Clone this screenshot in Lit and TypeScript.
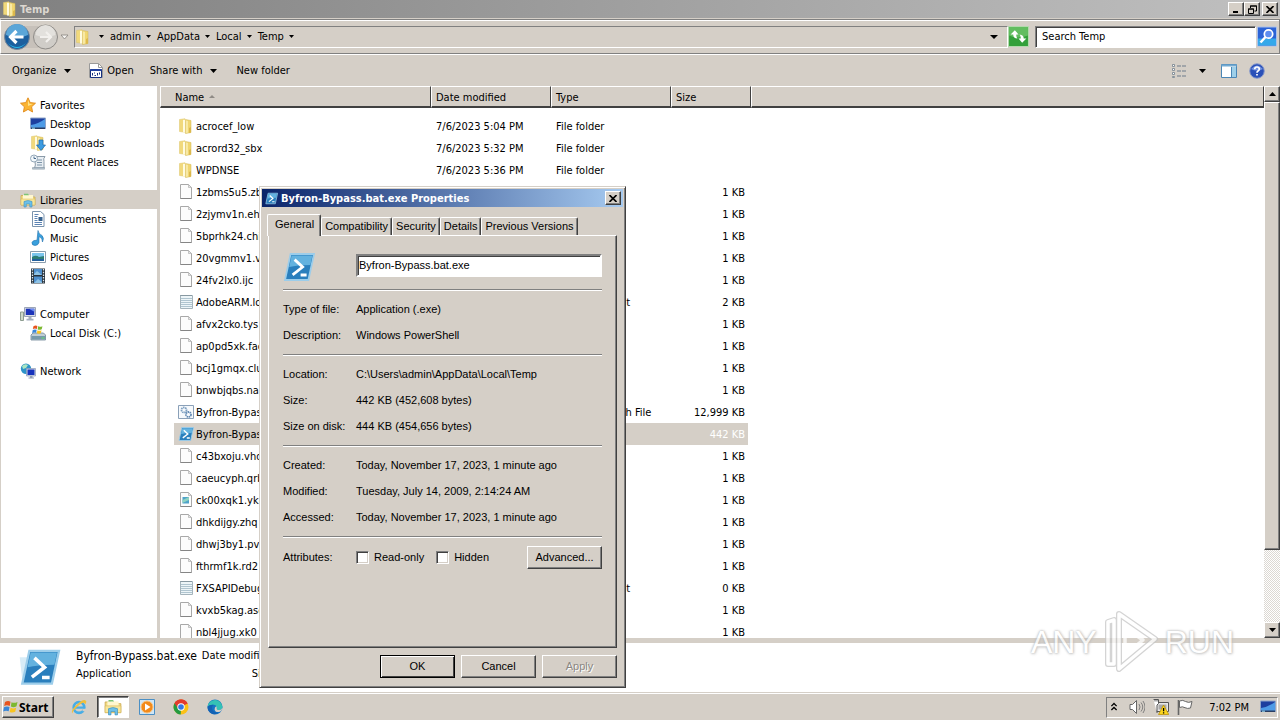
import { LitElement, html, css, svg, nothing } from "lit";
import { customElement } from "lit/decorators.js";
import { classMap } from "lit/directives/class-map.js";

const box = (body: unknown, size = 16, view = "0 0 16 16") =>
  html`<svg width=${size} height=${size} viewBox=${view} aria-hidden="true">${body}</svg>`;

const folderArt = svg`<path d="M1.500 1.500 7 .7v13.600L1.500 13.500z" fill="#f1d97c" stroke="#dcc468" stroke-width=".5"/><path d="M5 1.800h3.500v12.700H5z" fill="#fffbe0"/><path d="M7.500 1.500 13 2.500v12L7.500 15.600z" fill="#f0d671" stroke="#d3b751" stroke-width=".5"/><path d="M8 2.500 10 3v11.500L8 15z" fill="#f8e9a4"/><path d="M13 9v5.500l-2 .5V10z" fill="#dcb84c"/>`;
const openFolderArt = svg`<path d="M1 3.500h5l1 1.500h8v8H1z" fill="#f2dc83" stroke="#c9a64b" stroke-width=".7"/><path d="M3 3h10v4H3z" fill="#fff7cf"/><path d="M4 1.800h4l1 1.400H4z" fill="#7cc576"/><path d="M1 7h14v6H1z" fill="#f7e69b" stroke="#d5b659" stroke-width=".5"/><path d="M4 15V9.500q4-2 8 0V15h-2.200v-3H6.200v3z" fill="#6cc0e8" stroke="#3d8fbf" stroke-width=".6"/>`;
const psArt = svg`<path d="M3.800 1.500h11.700l-2.800 13H1z" fill="#2a7fbd" stroke="#9ccdea" stroke-width=".9"/><path d="M4.300 2.200h10.400l-1 4.800Q7 7 3.100 8z" fill="#63b2df"/><path d="m5.800 4.300 4 3.700-5 3.900M8.800 12h3" fill="none" stroke="#fff" stroke-width="1.400"/>`;
const screenArt = svg`<path d="M.5 2h15v10.500H.5z" fill="#1d3f9f" stroke="#8fa5c9"/><path d="M1 9q7-1 14-6v9H1z" fill="#4e9be6"/><path d="M1 11.500h14v1.500H1z" fill="#2a3d63"/><path d="M2 11.700h3v1H2z" fill="#9fe0f5"/>`;
const winFlag = svg`<path d="M2 3q3-2 5.500-.3L6.700 7Q4 5.700 1.200 7z" fill="#e8541e"/><path d="M8.500 3.200Q11 4.600 14.500 3l-1 4.300q-3 1.600-5.600.2z" fill="#7cb82f"/><path d="M1 8.200q3-1.400 5.500-.1L5.700 12.300Q3 11 .2 12.500z" fill="#3a87d8"/><path d="M7.600 8.700q2.500 1.500 5.600 0l-1 4.100q-3 1.500-5.500.1z" fill="#f8c420"/>`;
const page = svg`<path d="M2.500.5h8l3 3v11h-11z" fill="#fcfcfc" stroke="#a8a8a8"/><path d="M10.500.5v3h3z" fill="#e6e6e6" stroke="#b0b0b0" stroke-width=".7"/><path d="M2.500 14.500h11" stroke="#858585"/>`;

const icons: Record<string, unknown> = {
  folder: folderArt,
  file: page,
  text: svg`<path d="M2.500 1.500h12v13h-12z" fill="#edf5f8" stroke="#a5b4bc"/><path d="M3 4.500h11M3 6.500h11M3 8.500h11M3 10.500h11M3 12.500h11" stroke="#a9c0cb" stroke-width=".9"/><path d="M2.500 1.500h12" stroke="#687c87" stroke-dasharray="1 1"/>`,
  config: svg`<path d="M.5 1.500h15v13H.5z" fill="#f6f9fc" stroke="#8aa0b8"/><circle cx="6" cy="6" r="2.500" fill="none" stroke="#7d9fc0" stroke-width="1.800" stroke-dasharray="1.500 .6"/><circle cx="10.500" cy="10.500" r="2.500" fill="none" stroke="#5f87b2" stroke-width="1.800" stroke-dasharray="1.500 .6"/>`,
  image: svg`${page}<path d="M4.500 5h6.500v6.500H4.500z" fill="#4fa3c9"/><path d="M4.500 8 11 5v3l-6.500 3z" fill="#8fd3c2"/>`,
  ps: psArt,
  star: svg`<path d="m8 .8 2.200 4.800 5.300.6-3.900 3.600 1 5.200L8 12.400 3.400 15l1-5.200L.5 6.200l5.300-.6z" fill="#fbb431" stroke="#e08a1c" stroke-width=".9"/><path d="m8 3 1.400 3.700 3.600.4-5 2z" fill="#ffe48a"/>`,
  desktop: screenArt,
  downloads: svg`${folderArt}<path d="M9 5h4v5h2.500L11 15.500 6.500 10H9z" fill="#3c9be0" stroke="#1a68ad" stroke-width=".7"/>`,
  recent: svg`<path d="M5 2.500h10q-2 2-1 5v6.500H4.500q1.500-3 .5-6z" fill="#e8eef3" stroke="#8a9aa8"/><path d="M2.500 13.500h12v1.700h-12z" fill="#b7c5d0" stroke="#7f909f" stroke-width=".5"/><path d="M7 6h5M7 8.500h5M7 11h5" stroke="#7d94a8"/><circle cx="4" cy="4.500" r="3.500" fill="#f4f9fc" stroke="#93a7b8"/><path d="M4 2.500v2h2" stroke="#46688a" fill="none"/>`,
  libraries: openFolderArt,
  documents: svg`<path d="M2.500.5h8l3.500 3v12H2.500z" fill="#fff" stroke="#7a93ad"/><path d="M4.500 3.500h4M4.500 5.500h3M4.500 11.500h7.500M4.500 13.500h7.500M4.500 7.500h3M4.500 9.500h3" stroke="#5b83b4"/><path d="M8.500 6h4v4h-4z" fill="#35618f"/>`,
  music: svg`<path d="M8 .5q.5 3.500 4 5 2.500 2.500.5 6.500.2-4-3.500-5.500v6Q8 15.500 5 15.500 1.600 15.300 2 12.500q.8-2.600 5-2.300z" fill="#3aa0dd" stroke="#1e70ac" stroke-width=".6"/>`,
  pictures: svg`<path d="M.5 2.500h15v11H.5z" fill="#fff" stroke="#8b9dad"/><path d="M2 4h12v4H2z" fill="#7cc5ec"/><path d="M2 8q4-2.500 7 0l5-1v5H2z" fill="#2d7d74"/><path d="M2 10h12v2H2z" fill="#225f9c"/>`,
  videos: svg`<path d="M1 .5h14v15H1z" fill="#27323c"/><path d="M4 1h8v6H4zM4 8.500h8V15H4z" fill="#4d8fce"/><path d="m4 6 3-3 5 4H4zM4 15l4-4 4 3v1z" fill="#8fc3e5"/><path d="M2.500 1v14M13.500 1v14" stroke="#dfe7ee" stroke-width="1.300" stroke-dasharray="1.500 1.200"/>`,
  computer: svg`<path d="M.5 6h3v8.500h-3z" fill="#cfd9c9" stroke="#8d9d90"/><path d="M4.500 1.500h11v9h-11z" fill="#dcdfe6" stroke="#9ba5b7"/><path d="M5.800 2.700h8.500V9H5.800z" fill="#1c34b9"/><path d="M9 2.700h5.300v3z" fill="#6c8cf0"/><path d="M8.500 11h3v1.700h2v1.800H6.500v-1.800h2z" fill="#a5afbf"/>`,
  disk: svg`<path d="M1 10 3 8h10.500l2 2v5H1z" fill="#c1ced6" stroke="#6f8797" stroke-width=".8"/><path d="M1.500 11h14v3.500h-14z" fill="#7799aa"/><path d="M11.500 13h3" stroke="#64e06c"/><g transform="translate(2 -1) scale(.72)">${winFlag}</g>`,
  network: svg`<circle cx="6" cy="5.700" r="5.200" fill="#2d93c9"/><path d="M2 3q3-3 6-1L6 5 3 6zM7 6l3 1-2 3.500z" fill="#a9e6c2"/><path d="M6.500 5.500h9v7.500h-9z" fill="#d2dae8" stroke="#8c9ab4" stroke-width=".7"/><path d="M7.500 6.500h7V12h-7z" fill="#1733bd"/><path d="M10 13h2.500v1.500H14V15.500H8.500V14.500H10z" fill="#93a0b6"/>`,
  open: svg`<path d="M1.500.5h9l4 4v10h-13z" fill="#fff" stroke="#9a9a9a"/><path d="M10.500.5v4h4" fill="none" stroke="#9a9a9a"/><path d="M2.500 6.500h11v8h-11z" fill="#fff" stroke="#16307e"/><path d="M2.500 6h11v2h-11z" fill="#1f3f9e"/><path d="M4.500 10v2.500M6.500 9.500v1M6.500 12.500h1.500M9.500 10v2.500M11.500 9.500v2" stroke="#16307e"/>`,
  views: svg`<path d="M1.500 1.500h2v2h-2zM1.500 5.500h2v2h-2zM1.500 9.500h2v2h-2zM1.500 13.500h2v1h-2z" fill="#fff" stroke="#6f7d8c" stroke-width=".8"/><path d="M6 3h4M11 3h4M6 8h4M11 8h4M6 13h4M11 13h4" stroke="#6f7d8c" stroke-width="1.200"/>`,
  preview: svg`<path d="M.5 1.500h15v13H.5z" fill="#fff" stroke="#4a86b5"/><path d="M.5 1.500h15v2H.5z" fill="#72aad2"/><path d="M10.500 4v10.500" stroke="#4a86b5"/><path d="M11 4h4v10h-4z" fill="#9ed0ea"/>`,
  help: svg`<circle cx="8" cy="8" r="7.300" fill="#2a50b8" stroke="#8b9ccb"/><path d="M2 6q6-7 12 0-6 3-12 0" fill="#7494e0"/><path d="M5.700 6.200Q5.800 4 8 4t2.300 2Q10.300 7.200 9 8q-1 .6-1 1.700M8 11v1.600" fill="none" stroke="#fff" stroke-width="1.700"/>`,
  ie: svg`<circle cx="8" cy="8.500" r="5.300" fill="none" stroke="#47ade6" stroke-width="2.700"/><path d="M4 8.600h9" stroke="#47ade6" stroke-width="2.200"/><path d="M11.500 9.800h4v2.400h-4z" fill="#d5cfc7"/><path d="M1.500 14.500Q-1 12 6 5.500T15 2q1 1-1 3.500 0-2-2-1.700T5 9q-4 4-3.500 5.500" fill="#f0bf3c"/>`,
  media: svg`<path d="M.5.500h15v15H.5z" fill="#cfe6f6" stroke="#4b8fc4"/><circle cx="8" cy="8" r="6" fill="#f28a1a"/><circle cx="8" cy="8" r="6" fill="none" stroke="#fbc27b"/><path d="m6 4.500 5.500 3.500L6 11.500z" fill="#fff"/>`,
  chrome: svg`<circle cx="8" cy="8" r="7.500" fill="#fbc116"/><path d="M8 8 1.500 4.200A7.500 7.500 0 0 1 14.600 4.500z" fill="#e33b2e"/><path d="M8 8 7.700 15.500A7.500 7.500 0 0 1 1.500 4.200z" fill="#249a41"/><path d="M7 4.500h7.600A7.500 7.500 0 0 0 1.500 4.200L4.700 9z" fill="#e33b2e"/><circle cx="8" cy="8" r="3.700" fill="#fff"/><circle cx="8" cy="8" r="2.800" fill="#3478e5"/>`,
  edge: svg`<circle cx="8" cy="8" r="7.500" fill="#1674c4"/><path d="M.6 7.500A7.500 7.500 0 0 1 15.500 8q-.3 3-3.700 3-2.800 0-2.300-1.800Q10 6 6.500 5.700 2.500 5.500.6 7.500" fill="#35c2b5"/><path d="M.6 7.500Q2.500 5.300 6.500 5.700 4 8 5.500 11t6 2.300Q8 16.500 4 14.300.2 12 .6 7.500" fill="#1462b4"/><path d="M9.700 9Q9.300 11 12 11q2.500 0 3.400-2.200.2 2.700-3.200 4.200Q8 13.500 7.600 10.500 7.500 8 9.300 7.300 9.900 8 9.700 9" fill="#d5cfc7"/>`,
  chevrons: svg`<path d="m5 7 3-3 3 3M5 11.500l3-3 3 3" fill="none" stroke="#000" stroke-width="1.500"/>`,
  speaker: svg`<path d="M1 5.500h2.500L7.500 1.500v13l-4-4H1z" fill="#fff" stroke="#666"/><path d="M10 5q2 3 0 6M12 3.500q3.500 4.500 0 9M14 2q4 6 0 12" fill="none" stroke="#777" stroke-width=".9"/>`,
  lan: svg`<path d="M3.500 3.500h12v9h-12z" fill="#e8e8e8" stroke="#555"/><path d="M5.500 5.500h8v5h-8z" fill="#aaa"/><path d="M.5.500h5v4l-1.500 1.500V14M2 .5v2M4 .5v2" fill="#fff" stroke="#555"/><path d="m10.500 6 5.300 9.500H5.500z" fill="#fbd51d" stroke="#b68a00" stroke-width=".7"/><path d="M10.600 9v3.200M10.600 13.200v1.300" stroke="#000" stroke-width="1.300"/>`,
  flag: svg`<path d="M1.500 1v15" stroke="#666" stroke-width="1.600"/><path d="M2.500 2Q6 .5 8.500 2.500q3 1.800 6.500 0L13.500 9q-3 1-5.500-.3Q5.500 7 2.500 8.500z" fill="#fff" stroke="#666"/>`,
  start: winFlag,
};
const icon = (name: string, size = 16) => box(icons[name], size);
const down = () => html`<svg class="down" width="7" height="4" viewBox="0 0 7 4" aria-hidden="true"><path d="M0 0h7L3.500 4z"/></svg>`;

interface FileRow { name: string; kind: string; date?: string; type?: string; size?: string; selected?: boolean; }
const files: FileRow[] = [
  { name: "acrocef_low", kind: "folder", date: "7/6/2023 5:04 PM", type: "File folder" },
  { name: "acrord32_sbx", kind: "folder", date: "7/6/2023 5:32 PM", type: "File folder" },
  { name: "WPDNSE", kind: "folder", date: "7/6/2023 5:36 PM", type: "File folder" },
  { name: "1zbms5u5.zb", kind: "file", size: "1 KB" },
  { name: "2zjymv1n.eh", kind: "file", size: "1 KB" },
  { name: "5bprhk24.chi", kind: "file", size: "1 KB" },
  { name: "20vgmmv1.v", kind: "file", size: "1 KB" },
  { name: "24fv2lx0.ijc", kind: "file", size: "1 KB" },
  { name: "AdobeARM.log", kind: "text", type: "Text Document", size: "2 KB" },
  { name: "afvx2cko.tys", kind: "file", size: "1 KB" },
  { name: "ap0pd5xk.fac", kind: "file", size: "1 KB" },
  { name: "bcj1gmqx.clu", kind: "file", size: "1 KB" },
  { name: "bnwbjqbs.na", kind: "file", size: "1 KB" },
  { name: "Byfron-Bypass", kind: "config", type: "Windows Batch File", size: "12,999 KB" },
  { name: "Byfron-Bypass", kind: "ps", size: "442 KB", selected: true },
  { name: "c43bxoju.vhd", kind: "file", size: "1 KB" },
  { name: "caeucyph.qrb", kind: "file", size: "1 KB" },
  { name: "ck00xqk1.ykd", kind: "image", size: "1 KB" },
  { name: "dhkdijgy.zhq", kind: "file", size: "1 KB" },
  { name: "dhwj3by1.pv", kind: "file", size: "1 KB" },
  { name: "fthrmf1k.rd2", kind: "file", size: "1 KB" },
  { name: "FXSAPIDebug", kind: "text", type: "Text Document", size: "0 KB" },
  { name: "kvxb5kag.asc", kind: "file", size: "1 KB" },
  { name: "nbl4jjug.xk0", kind: "file", size: "1 KB" },
];

const places = [
  { label: "Favorites", icon: "star", children: [["Desktop", "desktop"], ["Downloads", "downloads"], ["Recent Places", "recent"]] },
  { label: "Libraries", icon: "libraries", selected: true, children: [["Documents", "documents"], ["Music", "music"], ["Pictures", "pictures"], ["Videos", "videos"]] },
  { label: "Computer", icon: "computer", children: [["Local Disk (C:)", "disk"]] },
  { label: "Network", icon: "network", children: [] as string[][] },
];

const face = css`
  * { box-sizing: border-box; }
  svg { display: block; flex: none; }
  button, input { font: inherit; color: inherit; margin: 0; border-radius: 0; }
  button { display: flex; align-items: center; padding: 0; border: 0; background: none; white-space: nowrap; }
  .raised {
    justify-content: center;
    background: #d5cfc7;
    border: 1px solid;
    border-color: #fff #404040 #404040 #fff;
    box-shadow: inset -1px -1px #808080;
  }
`;

@customElement("explorer-sidebar")
class ExplorerSidebar extends LitElement {
  static styles = [face, css`
    :host { display: block; background: #fff; border-left: 1px solid #d5cfc7; padding-top: 9px; overflow: hidden; }
    section { margin-bottom: 19px; }
    a { display: flex; align-items: center; gap: 4px; height: 19px; padding: 0 0 0 19px; color: #000; text-decoration: none; white-space: nowrap; }
    a.child { padding-left: 29px; }
    a.selected { background: #d5cfc7; }
    a span { padding-top: 2px; }
  `];
  render() {
    return html`<nav>${places.map(p => html`<section>
      <a href="#" class=${classMap({ selected: !!p.selected })}>${icon(p.icon)}<span>${p.label}</span></a>
      ${p.children.map(([label, i]) => html`<a href="#" class="child">${icon(i)}<span>${label}</span></a>`)}
    </section>`)}</nav>`;
  }
}

@customElement("file-list")
class FileList extends LitElement {
  static styles = [face, css`
    :host { display: grid; grid-template-columns: 1fr 16px; background: #fff; overflow: hidden; min-width: 0; }
    .pane { overflow: hidden; }
    table { width: 100%; table-layout: fixed; border-collapse: separate; border-spacing: 0; }
    .c-name { width: 271px; } .c-mid { width: 120px; } .c-size { width: 80px; }
    th { height: 22px; padding: 2px 0 0 4px; text-align: left; font-weight: normal; background: #d5cfc7; border: 1px solid; border-color: #fff #404040 #404040 #fff; border-bottom-width: 2px; white-space: nowrap; }
    th:first-child { padding-left: 14px; }
    .sort { display: inline-block; vertical-align: 3px; margin-left: 5px; fill: #8f8b86; }
    .gap td { height: 7px; padding: 0; }
    td { height: 22px; padding: 2px 0 0 5px; white-space: nowrap; background-clip: padding-box; }
    td.name { padding: 0 0 0 4px; border-left: 14px solid transparent; }
    td.size { text-align: right; padding-right: 3px; border-right: 3px solid transparent; }
    .cell { display: flex; align-items: center; gap: 2px; }
    .cell span { padding-top: 2px; }
    .selected td:not(:last-child) { background-color: #d5cfc7; }
    .selected td.size { color: #fff; }
    .bar { display: flex; flex-direction: column; justify-content: space-between; background: repeating-conic-gradient(#fff 0 25%, #dcd8d2 0 50%) 0 0 / 2px 2px; }
    .bar button { height: 16px; width: 16px; }
    .thumb { height: 448px; margin-bottom: auto; }
  `];
  render() {
    return html`<div class="pane"><table>
      <colgroup><col class="c-name"><col class="c-mid"><col class="c-mid"><col class="c-size"><col></colgroup>
      <thead><tr><th>Name<svg class="sort" width="6" height="3" viewBox="0 0 6 3"><path d="M0 3h6L3 0z"/></svg></th><th>Date modified</th><th>Type</th><th>Size</th><th></th></tr></thead>
      <tbody><tr class="gap"><td colspan="5"></td></tr>
      ${files.map(f => html`<tr class=${classMap({ selected: !!f.selected })}>
        <td class="name"><div class="cell">${icon(f.kind)}<span>${f.name}</span></div></td>
        <td>${f.date ?? nothing}</td><td>${f.type ?? nothing}</td><td class="size">${f.size ?? nothing}</td><td></td></tr>`)}
      </tbody></table></div>
      <div class="bar">
        <button class="raised" aria-label="Scroll up"><svg width="7" height="4" viewBox="0 0 7 4"><path d="M0 4h7L3.500 0z"/></svg></button>
        <div class="thumb raised"></div>
        <button class="raised" aria-label="Scroll down">${down()}</button>
      </div>`;
  }
}

@customElement("properties-dialog")
class PropertiesDialog extends LitElement {
  static styles = [face, css`
    :host { display: block; width: 367px; padding: 1px; background: #d5cfc7; border: 1px solid; border-color: #d5cfc7 #404040 #404040 #d5cfc7; box-shadow: inset 1px 1px #fff, inset -1px -1px #808080; font: 11px/13px "Liberation Sans", Arial, sans-serif; }
    .title { display: flex; align-items: center; gap: 3px; height: 18px; margin: 1px; padding: 0 2px 0 3px; color: #fff; background: linear-gradient(90deg, #0a246a, #a6caf0); font: bold 11px "DejaVu Sans Condensed", sans-serif; }
    .title span { flex: 1; }
    .close { width: 16px; height: 14px; }
    .tabs { display: flex; align-items: flex-end; height: 27px; padding: 0 0 0 8px; }
    .tab { height: 18px; justify-content: center; padding: 0 3px; border: 1px solid; border-color: #fff #404040 transparent #fff; border-bottom: 0; border-radius: 2px 2px 0 0; box-shadow: inset -1px 0 #808080; }
    .tab.active { height: 22px; margin: 0 0 -1px -2px; padding: 0 6px 2px 7px; background: #d5cfc7; position: relative; }
    .panel { margin: 0 7px; height: 413px; padding: 0 14px; border: 1px solid; border-color: #fff #404040 #404040 #fff; box-shadow: inset -1px -1px #808080; }
    .head { display: flex; height: 53px; padding-top: 18px; }
    .head svg { margin-top: -3px; }
    .head .art { width: 73px; }
    .name { flex: 1; min-width: 0; height: 23px; padding: 0 1px 2px; background: #fff; border: 2px solid; border-color: #808080 #fff #fff #808080; box-shadow: inset 1px 1px #404040; outline: 0; }
    dl { margin: 0; padding: 6px 0; border-top: 1px solid #808080; box-shadow: inset 0 1px #fff; }
    dl div, .attributes { display: flex; align-items: center; height: 26px; }
    dt, .attributes > span { width: 73px; white-space: nowrap; }
    dd { margin: 0; }
    .last { padding-top: 7px; border-top: 1px solid #808080; box-shadow: inset 0 1px #fff; }
    label { display: flex; align-items: center; gap: 5px; margin-right: 12px; }
    input[type="checkbox"] { appearance: none; width: 13px; height: 13px; background: #fff; border: 1px solid; border-color: #808080 #fff #fff #808080; box-shadow: inset 1px 1px #404040, inset -1px -1px #d5cfc7; }
    .push { width: 75px; height: 23px; }
    .attributes .push { margin-left: auto; }
    .actions { display: flex; justify-content: flex-end; gap: 6px; padding: 7px 7px 8px; }
    .default { border-color: #000; box-shadow: inset 1px 1px #fff, inset -1px -1px #404040; }
    .push:disabled { color: #8b8782; text-shadow: 1px 1px #fff; }
  `];
  private group(rows: string[][]) {
    return html`<dl>${rows.map(([k, v]) => html`<div><dt>${k}</dt><dd>${v}</dd></div>`)}</dl>`;
  }
  render() {
    return html`
      <div class="title">${icon("ps", 13)}<span>Byfron-Bypass.bat.exe Properties</span>
        <button class="close raised" aria-label="Close"><svg width="8" height="7" viewBox="0 0 8 7"><path d="m.5 0 7 7m0-7-7 7" stroke="#000" stroke-width="1.600"/></svg></button></div>
      <div class="tabs" role="tablist">
        ${["General", "Compatibility", "Security", "Details", "Previous Versions"].map((t, i) => html`<button role="tab" class=${classMap({ tab: true, active: i === 0 })}>${t}</button>`)}
      </div>
      <div class="panel">
        <div class="head"><span class="art">${icon("ps", 32)}</span><input class="name" aria-label="File name" .value=${"Byfron-Bypass.bat.exe"}></div>
        ${this.group([["Type of file:", "Application (.exe)"], ["Description:", "Windows PowerShell"]])}
        ${this.group([["Location:", "C:\\Users\\admin\\AppData\\Local\\Temp"], ["Size:", "442 KB (452,608 bytes)"], ["Size on disk:", "444 KB (454,656 bytes)"]])}
        ${this.group([["Created:", "Today, November 17, 2023, 1 minute ago"], ["Modified:", "Tuesday, July 14, 2009, 2:14:24 AM"], ["Accessed:", "Today, November 17, 2023, 1 minute ago"]])}
        <div class="last"><div class="attributes"><span>Attributes:</span>
          <label><input type="checkbox">Read-only</label><label><input type="checkbox">Hidden</label>
          <button class="push raised">Advanced...</button></div></div>
      </div>
      <div class="actions"><button class="push raised default">OK</button><button class="push raised">Cancel</button><button class="push raised" disabled>Apply</button></div>`;
  }
}

@customElement("desktop-taskbar")
class DesktopTaskbar extends LitElement {
  static styles = [face, css`
    :host { display: flex; align-items: center; height: 28px; padding: 1px 2px 0; background: #d5cfc7; border-top: 1px solid #d5cfc7; box-shadow: inset 0 1px #fff; }
    .start { width: 52px; height: 22px; font: bold 12px "Noto Sans", sans-serif; justify-content: flex-start; }
    .apps { display: flex; flex: 1; padding-left: 9px; gap: 2px; }
    .app { width: 32px; height: 22px; justify-content: center; }
    .app.on { background: #fff; border: 1px solid; border-color: #404040 #fff #fff #404040; box-shadow: inset 1px 1px #808080; }
    .tray { display: flex; align-items: center; gap: 8px; height: 21px; padding: 0 1px 0 0; border: 1px solid; border-color: #808080 #fff #fff #808080; }
    time { padding: 2px 3px 0 8px; }
  `];
  render() {
    return html`<button class="start raised">${icon("start", 16)}Start</button>
      <div class="apps">${["ie", "libraries", "media", "chrome", "edge"].map(n => html`<button class=${classMap({ app: true, on: n === "libraries" })} aria-label=${n}>${icon(n, n === "libraries" ? 18 : 16)}</button>`)}</div>
      <div class="tray">${icon("chevrons", 14)}${["speaker", "lan", "flag"].map(n => icon(n))}<time>7:02 PM</time>${icon("desktop")}</div>`;
  }
}

@customElement("app-root")
class AppRoot extends LitElement {
  static styles = [face, css`
    :host { position: relative; display: flex; flex-direction: column; height: 100vh; overflow: hidden; background: #d5cfc7; color: #000; font: 11px/14px "DejaVu Sans Condensed", "Noto Sans", sans-serif; }
    .title { display: flex; align-items: center; gap: 2px; height: 18px; padding: 0 2px; background: linear-gradient(90deg, #808080, #c0c0c0); color: #dcd7d0; font: bold 11px "DejaVu Sans Condensed", sans-serif; }
    .title span { flex: 1; }
    .title .pair { display: flex; }
    .title .raised { width: 16px; height: 14px; color: #000; }
    .nav { display: flex; align-items: center; height: 35px; margin-top: 1px; padding: 0 2px; border: 1px solid; border-color: #808080 #808080 #808080 #fff; box-shadow: inset 0 1px #fff; }
    .history { margin: 0 5px 0 1px; }
    .address { display: flex; align-items: center; flex: 1; min-width: 0; height: 22px; border: 1px solid; border-color: #808080 #fff #fff #808080; }
    .address .more { margin-left: auto; padding: 0 9px; }
    .crumb { gap: 5px; padding-left: 6px; }
    .address > svg + .down { margin-left: 8px; }
    .down { width: 7px; height: 4px; }
    .small .down { width: 5px; height: 3px; }
    .search { width: 221px; height: 22px; margin: 0 1px 0 6px; padding: 0 6px; background: #fff; border: 1px solid; border-color: #808080 #fff #fff #808080; box-shadow: inset 1px 1px #404040; outline: 0; }
    .search::placeholder { color: #000; opacity: 1; }
    .tools { display: flex; align-items: center; height: 32px; padding: 0 15px 0 12px; border-top: 1px solid #fff; }
    .tools button { gap: 8px; margin-right: 17px; }
    .tools .open { gap: 3px; margin-right: 16px; }
    .tools .share { margin-right: 19px; }
    .tools .views { gap: 12px; margin: 0 3px 0 auto; }
    .tools .icon { margin: 0 0 0 12px; }
    .body { display: grid; grid-template-columns: 157px minmax(0, 1fr); gap: 3px; flex: 1; min-height: 0; }
    .details { display: flex; gap: 15px; height: 54px; padding: 4px 19px; background: #fff; border-top: 5px solid #d5cfc7; }
    .details dl { display: grid; grid-template-columns: auto auto; gap: 4px 5px; align-content: start; margin: 2px 0 0; white-space: nowrap; }
    .details .file { font-size: 12px; }
    .details dd { margin: 0; }
    .details .label { text-align: right; }
    properties-dialog { position: absolute; left: 259px; top: 186px; }
    .mark { position: absolute; right: 46px; bottom: 46px; display: flex; align-items: center; gap: 3px; opacity: .75; pointer-events: none; font: 32px/64px "Liberation Sans", sans-serif; color: #fff; text-shadow: 0 0 2px #aaa, 0 0 3px #bbb, 1px 1px 3px #ccc; }
  `];
  render() {
    return html`
      <header class="title">${icon("folder")}<span>Temp</span>
        <div class="pair">
        <button class="raised" aria-label="Minimize"><svg width="8" height="8" viewBox="0 0 8 8"><path d="M1 6h5v2H1z"/></svg></button>
        <button class="raised" aria-label="Restore"><svg width="9" height="9" viewBox="0 0 9 9"><path d="M2.500 3V1h6v5h-2M.5 4h5v4.500h-5z" fill="none" stroke="#000"/><path d="M2 .5h7v1H2zM0 3.500h6v1H0z"/></svg></button></div>
        <button class="raised" aria-label="Close"><svg width="8" height="7" viewBox="0 0 8 7"><path d="m.5 0 7 7m0-7-7 7" stroke="#000" stroke-width="1.600"/></svg></button>
      </header>
      <div class="nav">
        <button class="history" aria-label="Back and forward"><svg width="65" height="28" viewBox="0 0 65 28">
          <path d="M13 3h30v22H13z" fill="#c7c1ba"/>
          <circle cx="13" cy="14" r="12.500" fill="#1c5f9e" stroke="#7d8b99"/><path d="M2 12a11 11 0 0 1 22 0q-11 5-22 0" fill="#5ba6d8"/><path d="M4 20q9 8 18 0-4 5-9 5t-9-5" fill="#29b7e8"/>
          <path d="M19.500 14H7M12.500 8 6.500 14l6 6" fill="none" stroke="#fff" stroke-width="3.200"/>
          <circle cx="41.500" cy="14" r="12" fill="#d0cdc8" stroke="#8e8b87"/><path d="M31.500 12a10 10 0 0 1 20 0q-10 4-20 0" fill="#e3e1dd"/>
          <path d="M36 14h10M42 9l5 5-5 5" fill="none" stroke="#f2f0ed" stroke-width="2.200"/>
          <path d="M57 12h7l-3.500 4z" fill="#f7f5f2" stroke="#85817c" stroke-width=".8"/></svg></button>
        <div class="address small">${icon("folder")}${down()}
          ${["admin", "AppData", "Local", "Temp"].map(c => html`<button class="crumb">${c}${down()}</button>`)}
          <button class="more" aria-label="Previous locations"><svg width="8" height="4" viewBox="0 0 8 4"><path d="M0 0h8L4 4z"/></svg></button>
        </div>
        <button aria-label="Refresh"><svg width="21" height="21" viewBox="0 0 20 20"><path d="M.5.500h19v19H.5z" fill="#33a03a" stroke="#b3d9ad"/><path d="M1 1h18v8q-9 4-18 0z" fill="#62bd60"/><path d="M6.500 4 2.500 8h2.500q0 3.500 4 4-1.500-2-1-4H10zM13.500 16l4-4H15q0-3.500-4-4 1.500 2 1 4H10z" fill="#fff"/></svg></button>
        <input class="search" type="text" aria-label="Search" placeholder="Search Temp">
        <button aria-label="Start search"><svg width="20" height="21" viewBox="0 0 20 20"><path d="M.5.500h19v19H.5z" fill="#2c63d6" stroke="#a9c0ea"/><path d="M1 12h18v7H1z" fill="#35a8ea"/><circle cx="11.500" cy="7.500" r="4.200" fill="#5d8df0" stroke="#fff" stroke-width="1.700"/><path d="m8.500 10.500-5 5.500" stroke="#fff" stroke-width="2.500"/></svg></button>
      </div>
      <div class="tools">
        <button>Organize${down()}</button>
        <button class="open">${icon("open")}Open</button>
        <button class="share">Share with${down()}</button>
        <button>New folder</button>
        <button class="views" aria-label="Views">${icon("views")}${down()}</button>
        <button class="icon" aria-label="Preview pane">${icon("preview")}</button>
        <button class="icon" aria-label="Help">${icon("help")}</button>
      </div>
      <main class="body"><explorer-sidebar></explorer-sidebar><file-list></file-list></main>
      <div class="details"><svg width="42" height="38" viewBox="0 0 16 15"><path d="M0 4h4v9H1z" fill="#d7ecf7"/>${psArt}</svg>
        <dl><dt class="file">Byfron-Bypass.bat.exe</dt><dd class="label">Date modified:</dd><dt>Application</dt><dd class="label">Size:</dd></dl></div>
      <desktop-taskbar></desktop-taskbar>
      <properties-dialog></properties-dialog>
      <div class="mark"><span>ANY</span><svg width="62" height="64" viewBox="0 0 58 64"><g fill="none" stroke-linejoin="round"><g stroke="#c6c6c6" stroke-width="6"><path d="M12 10v44h-6V12zM17 4l36 25-36 30z"/></g><g stroke="#fff" stroke-width="3.500"><path d="M12 10v44h-6V12zM17 4l36 25-36 30z"/><path d="M23 18l18 12-18 15z"/></g></g></svg><span>RUN</span></div>`;
  }
}
